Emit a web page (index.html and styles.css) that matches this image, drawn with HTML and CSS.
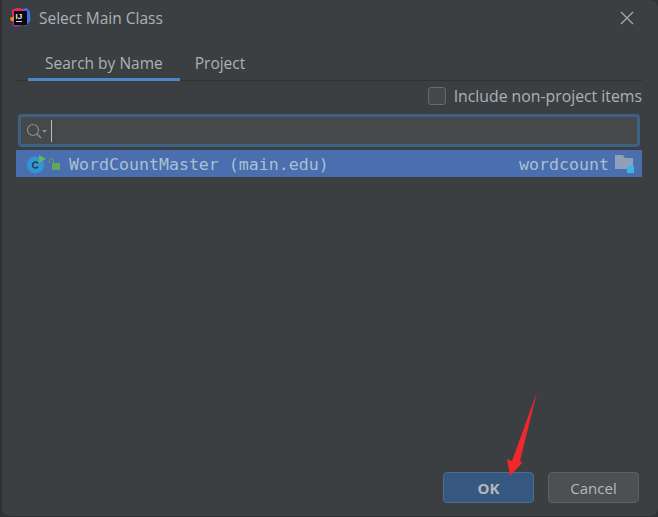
FILE: index.html
```html
<!DOCTYPE html>
<html lang="en">
<head>
  <meta charset="UTF-8" />
  <title>Select Main Class</title>
  <link rel="stylesheet" href="styles.css">
</head>
<body>
  <div id="dialog">
    <div class="title-bar">
      <svg class="app-icon" width="24" height="24" viewBox="0 0 24 24">
        <path d="M3 4 L8 2 L15 3 L16 8 L6 12 L3 9 Z" fill="#f0265f"/>
        <path d="M14 3 L18 2 L21 6 L21.5 15 L17 20 L13 18 Z" fill="#3f6fe0"/>
        <path d="M1 12 L5 10 L6 15 L2 15 Z" fill="#f7891f"/>
        <path d="M3 15 L8 15 L12 20 L7 21 L4 20 Z" fill="#9a2fa0"/>
        <rect x="5" y="5" width="13" height="14" fill="#0b0b0d"/>
        <text x="6.5" y="13" class="app-icon-text">IJ</text>
        <rect x="7" y="15" width="6" height="1" fill="#d8d8d8"/>
      </svg>
      <span class="title">Select Main Class</span>
      <svg class="close" width="14" height="14" viewBox="0 0 14 14">
        <path d="M1 1 L13 13 M13 1 L1 13" stroke="#a8adb0" stroke-width="1.2" fill="none"/>
      </svg>
    </div>

    <div class="tab-container">
      <div class="tab active">Search by Name</div>
      <div class="tab">Project</div>
    </div>

    <div class="options">
      <span class="checkbox"></span>
      <span>Include non-project items</span>
    </div>

    <div class="search-box">
      <svg width="24" height="18" viewBox="0 0 24 18">
        <circle cx="7" cy="8" r="5.5" stroke="#8a8e90" stroke-width="1.2" fill="none"/>
        <path d="M11 12 L15 16" stroke="#8a8e90" stroke-width="1.4"/>
        <path d="M16 8 L21 8 L18.5 11 Z" fill="#8a8e90"/>
      </svg>
      <span class="caret"></span>
    </div>

    <div class="result-row">
      <svg class="class-icon" width="22" height="20" viewBox="0 0 22 20">
        <circle cx="9.5" cy="11" r="8.5" fill="#3296d2"/>
        <path d="M12 9.2 A3 3 0 1 0 12 12.8" stroke="#2a3a50" stroke-width="1.6" fill="none"/>
        <path d="M13 1 L20 5 L13 9 Z" fill="#5fb85a"/>
      </svg>
      <svg class="lock-icon" width="11" height="12" viewBox="0 0 11 12">
        <path d="M0.5 5 V2.5 Q0.5 0.5 2.5 0.5 Q4.5 0.5 4.5 2.5 V5" stroke="#5fa85a" stroke-width="1" fill="none"/>
        <rect x="3" y="5" width="8" height="7" fill="#5fa85a"/>
      </svg>
      <span class="class-name">WordCountMaster (main.edu)</span>
      <span class="module-name">wordcount</span>
      <svg class="folder-icon" width="20" height="19" viewBox="0 0 20 19">
        <path d="M0 0 H8 L10 3 H18 V14 H0 Z" fill="#8fa0b8"/>
        <rect x="12" y="11" width="7" height="7" fill="#3fb4e8"/>
      </svg>
    </div>

    <div class="spacer"></div>

    <div class="buttons">
      <button class="btn btn-ok">OK</button>
      <button class="btn">Cancel</button>
    </div>
  </div>

  <!-- annotation drawn over the screenshot -->
  <svg class="arrow" width="658" height="517" viewBox="0 0 658 517">
    <path d="M537 392 L520 461 L522 463 L510 476 L507 459 L512 461 Z" fill="#f0272c"/>
  </svg>
</body>
</html>
```

FILE: styles.css
```css
html, body {
  margin: 0;
  height: 100%;
}

body {
  background: #2f3132;
  font-family: "Open Sans", "Noto Sans", sans-serif;
  color: #a9b2b8;
  overflow: hidden;
}

#dialog {
  box-sizing: border-box;
  width: 656px;
  height: 516px;
  margin-left: 2px;
  background: #3c3f41;
  border-radius: 0 8px 8px 8px;
  padding: 0 16px 13px 14px;
  display: flex;
  flex-direction: column;
}

.title-bar {
  display: flex;
  align-items: center;
  height: 36px;
  font-size: 15.5px;
}

.app-icon {
  margin-left: -7px;
  margin-right: 6px;
}

.app-icon-text {
  font-family: "Liberation Sans", sans-serif;
  font-size: 8px;
  font-weight: bold;
  fill: #e8e8e8;
}

.title {
  flex: 1;
}

.close {
  margin-right: 8px;
}

.tab-container {
  display: flex;
  height: 45px;
  box-sizing: border-box;
  border-bottom: 1px solid #323232;
  font-size: 15.5px;
}

.tab {
  padding: 16px 15px 0 15px;
  margin-bottom: -1px;
  box-sizing: border-box;
  height: 45px;
}

.tab:first-child {
  margin-left: 12px;
  padding-left: 17px;
  padding-right: 17px;
}

.tab.active {
  border-bottom: 3px solid #4a88c7;
}

.options {
  display: flex;
  justify-content: flex-end;
  align-items: center;
  gap: 8px;
  height: 30px;
  margin-bottom: 2px;
  font-size: 15.8px;
}

.checkbox {
  width: 16px;
  height: 16px;
  background: #43494a;
  border: 1px solid #6b6b6b;
  border-radius: 3px;
}

.search-box {
  box-sizing: border-box;
  height: 33px;
  margin: 1px 2px 3px 2px;
  background: #45494a;
  border: 3px solid #3d6185;
  border-radius: 4px;
  display: flex;
  align-items: center;
  padding-left: 5px;
}

.caret {
  width: 1px;
  height: 22px;
  margin-left: 1px;
  background: #bbbbbb;
}

.result-row {
  display: flex;
  align-items: center;
  height: 27px;
  background: #4b6eaf;
  padding: 0 7px 0 10px;
  font-family: "DejaVu Sans Mono", monospace;
  font-size: 16.6px;
  color: #a9c0d2;
}

.class-icon {
  margin-right: 1px;
}

.lock-icon {
  margin-right: 9px;
}

.class-name {
  flex: 1;
  padding-top: 2px;
}

.module-name {
  margin-right: 6px;
  padding-top: 2px;
}

.folder-icon {
  margin-top: 2px;
}

.spacer {
  flex: 1;
}

.buttons {
  display: flex;
  justify-content: flex-end;
  gap: 14px;
  margin-right: 3px;
}

.btn {
  width: 91px;
  height: 31px;
  font-family: "Open Sans", sans-serif;
  font-size: 15px;
  color: #b4b8ba;
  background: #4c5052;
  border: 1px solid #5e6060;
  border-radius: 4px;
  padding: 0;
}

.btn-ok {
  background: #365880;
  border-color: #4c708c;
  font-weight: bold;
}

.arrow {
  position: absolute;
  left: 0;
  top: 0;
  pointer-events: none;
}
```
